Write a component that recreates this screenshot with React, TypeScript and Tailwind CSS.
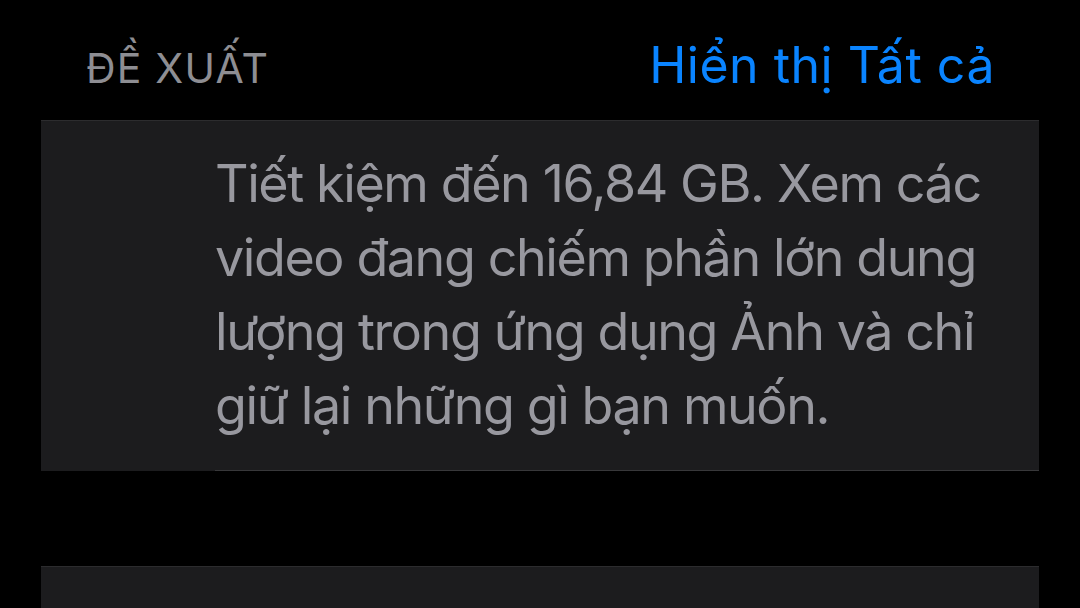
export default function App() {
  return (
    <div className="h-[608px] w-[1080px] overflow-hidden bg-black font-['Inter',sans-serif]">
      <div className="flex h-[120px] items-baseline justify-between pl-[86px] pr-[85px] pt-[40px]">
        <span className="text-[41px] leading-none tracking-[1.2px] text-[#8e8e93]">ĐỀ XUẤT</span>
        <span className="text-[50px] leading-none tracking-[0.5px] text-[#0a84ff]">Hiển thị Tất cả</span>
      </div>
      <div className="mx-[41px] border-t border-[#2c2c2e] bg-[#1c1c1e] pl-[174px]">
        <p className="border-b border-[#38383a] pt-[26px] pb-[27px] pr-[30px] text-[52px] leading-[74px] tracking-[-1.4px] text-[#98989f]">
          Tiết kiệm đến 16,84 GB. Xem các video đang chiếm phần lớn dung lượng trong ứng dụng Ảnh và chỉ giữ lại những gì bạn muốn.
        </p>
      </div>
      <div className="mx-[41px] mt-[95px] h-[60px] border-t border-[#2c2c2e] bg-[#1c1c1e]" />
    </div>
  );
}
